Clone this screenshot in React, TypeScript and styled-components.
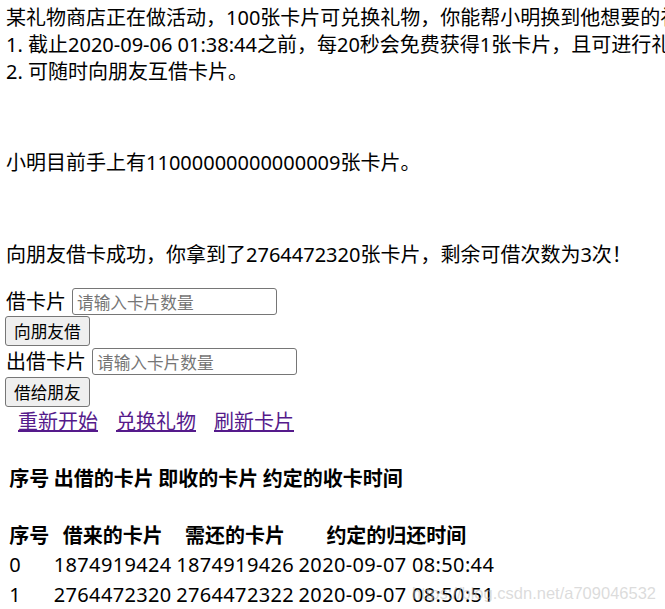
import React from 'react';
import styled, { createGlobalStyle } from 'styled-components';

const GlobalStyle = createGlobalStyle`
  html, body {
    margin: 0;
    padding: 0;
    overflow: hidden;
    background: #fff;
  }
  body {
    font-family: "Noto Sans", "Noto Sans CJK SC", sans-serif;
    font-size: 20px;
    line-height: 27px;
    color: #000;
  }
`;

const Page = styled.div`
  position: relative;
  width: 665px;
  height: 609px;
  padding: 4px 0 0 6px;
  box-sizing: border-box;
  overflow: hidden;
`;

const Line = styled.div`
  white-space: nowrap;
`;

const Block = styled.div<{ gap: number }>`
  margin-top: ${({ gap }) => gap}px;
`;

const FieldRow = styled.div<{ rowHeight: number }>`
  display: flex;
  align-items: center;
  gap: 6px;
  height: ${({ rowHeight }) => rowHeight}px;
  white-space: nowrap;
`;

const CardInput = styled.input`
  width: 205px;
  height: 27px;
  box-sizing: border-box;
  padding: 1px 4px;
  border: 1px solid #767676;
  border-radius: 3px;
  font-family: "Noto Sans CJK SC", sans-serif;
  font-size: 16.67px;
  color: #000;
  outline: none;
  &::placeholder {
    color: #757575;
  }
`;

const ActionButton = styled.button`
  display: block;
  height: 30px;
  margin-left: -1px;
  padding: 0 8px;
  border: 1px solid #767676;
  border-radius: 3px;
  background: #efefef;
  font-family: "Noto Sans CJK SC", sans-serif;
  font-size: 16.67px;
  line-height: 28px;
  color: #000;
`;

const LinkRow = styled.div`
  display: flex;
  gap: 18px;
  padding-left: 12px;
  height: 28px;
  align-items: center;
`;

const NavLink = styled.a`
  color: #551a8b;
  text-decoration: underline;
  cursor: pointer;
`;

const Table = styled.table<{ gap: number }>`
  margin-top: ${({ gap }) => gap}px;
  border-spacing: 2.5px;
  border-collapse: separate;
  font-size: 20px;
  line-height: 25px;
`;

const Th = styled.th`
  padding: 1.25px;
  font-weight: 700;
  text-align: center;
  white-space: nowrap;
`;

const Td = styled.td`
  padding: 1.25px;
  text-align: left;
  letter-spacing: 0.35px;
  white-space: nowrap;
`;

// csdn watermark stamped over the bottom-right corner
const Watermark = styled.div`
  position: absolute;
  left: 412px;
  top: 582px;
  font-family: "Liberation Sans", Arial, sans-serif;
  font-size: 16.5px;
  line-height: 22px;
  color: rgba(190, 190, 190, 0.55);
  white-space: nowrap;
  pointer-events: none;
`;

interface Loan {
  id: number;
  borrowed: number;
  owed: number;
  due: string;
}

const loans: Loan[] = [
  { id: 0, borrowed: 1874919424, owed: 1874919426, due: '2020-09-07 08:50:44' },
  { id: 1, borrowed: 2764472320, owed: 2764472322, due: '2020-09-07 08:50:51' },
];

const lentHeaders = ['序号', '出借的卡片', '即收的卡片', '约定的收卡时间'];
const borrowHeaders = ['序号', '借来的卡片', '需还的卡片', '约定的归还时间'];

const App = (): JSX.Element => {
  return (
    <>
      <GlobalStyle />
      <Page>
        <div>
          <Line>某礼物商店正在做活动，100张卡片可兑换礼物，你能帮小明换到他想要的礼物吗？</Line>
          <Line>1. 截止2020-09-06 01:38:44之前，每20秒会免费获得1张卡片，且可进行礼物兑换；</Line>
          <Line>2. 可随时向朋友互借卡片。</Line>
        </div>
        <Block gap={64}>
          <Line>小明目前手上有11000000000000009张卡片。</Line>
        </Block>
        <Block gap={65}>
          <Line>向朋友借卡成功，你拿到了2764472320张卡片，剩余可借次数为3次！</Line>
        </Block>

        <Block gap={19}>
          <FieldRow rowHeight={29}>
            借卡片
            <CardInput placeholder="请输入卡片数量" />
          </FieldRow>
          <ActionButton>向朋友借</ActionButton>
          <FieldRow rowHeight={31}>
            出借卡片
            <CardInput placeholder="请输入卡片数量" />
          </FieldRow>
          <ActionButton>借给朋友</ActionButton>
        </Block>

        <LinkRow>
          <NavLink>重新开始</NavLink>
          <NavLink>兑换礼物</NavLink>
          <NavLink>刷新卡片</NavLink>
        </LinkRow>

        <Table gap={28}>
          <thead>
            <tr>
              {lentHeaders.map((h) => (
                <Th key={h}>{h}</Th>
              ))}
            </tr>
          </thead>
        </Table>

        <Table gap={25}>
          <thead>
            <tr>
              {borrowHeaders.map((h) => (
                <Th key={h}>{h}</Th>
              ))}
            </tr>
          </thead>
          <tbody>
            {loans.map((loan) => (
              <tr key={loan.id}>
                <Td>{loan.id}</Td>
                <Td>{loan.borrowed}</Td>
                <Td>{loan.owed}</Td>
                <Td>{loan.due}</Td>
              </tr>
            ))}
          </tbody>
        </Table>

        <Watermark>https://blog.csdn.net/a709046532</Watermark>
      </Page>
    </>
  );
};

export default App;
